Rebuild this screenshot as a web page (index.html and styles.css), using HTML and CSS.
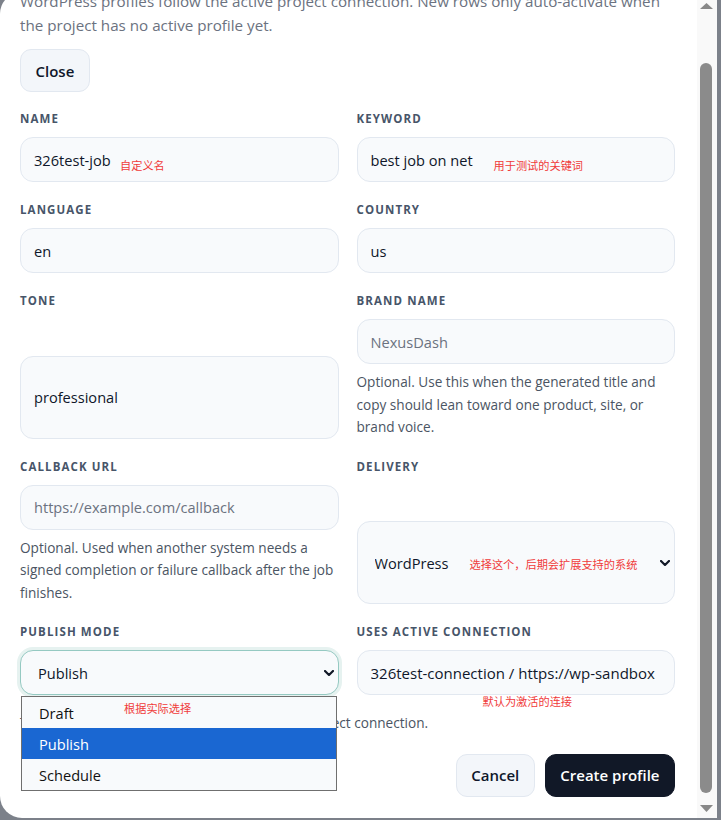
FILE: index.html
```html
<!DOCTYPE html>
<html lang="en">
<head>
<meta charset="utf-8">
<title>New content profile</title>
<link rel="stylesheet" href="styles.css">
</head>
<body>
<div class="modal">
  <div class="modal-body" id="modal-body">
    <header class="modal-head">
      <h2 class="title">New content profile</h2>
      <p class="desc">WordPress profiles follow the active project connection. New rows only auto-activate when the project has no active profile yet.</p>
      <button class="btn btn-light" type="button">Close</button>
    </header>
    <form class="form">
      <div class="grid">
        <div class="field">
          <label class="field-label">Name</label>
          <div class="control">
            <input class="input" value="326test-job">
            <span class="note note-name">自定义名</span>
          </div>
        </div>
        <div class="field">
          <label class="field-label">Keyword</label>
          <div class="control">
            <input class="input" value="best job on net">
            <span class="note note-keyword">用于测试的关键词</span>
          </div>
        </div>
        <div class="field">
          <label class="field-label">Language</label>
          <div class="control"><input class="input" value="en"></div>
        </div>
        <div class="field">
          <label class="field-label">Country</label>
          <div class="control"><input class="input" value="us"></div>
        </div>
        <div class="field field-tall">
          <label class="field-label">Tone</label>
          <div class="control"><input class="input input-tall" value="professional"></div>
        </div>
        <div class="field">
          <label class="field-label">Brand name</label>
          <div class="control"><input class="input" placeholder="NexusDash"></div>
          <p class="help">Optional. Use this when the generated title and copy should lean toward one product, site, or brand voice.</p>
        </div>
        <div class="field">
          <label class="field-label">Callback URL</label>
          <div class="control"><input class="input" placeholder="https://example.com/callback"></div>
          <p class="help">Optional. Used when another system needs a signed completion or failure callback after the job finishes.</p>
        </div>
        <div class="field field-tall">
          <label class="field-label">Delivery</label>
          <div class="control">
            <select class="input select input-tall"><option>WordPress</option></select>
            <svg class="chev" viewBox="0 0 10 6"><path d="M1 1 L5 5 L9 1" fill="none" stroke="#111827" stroke-width="2.2" stroke-linecap="round" stroke-linejoin="round"/></svg>
            <span class="note note-delivery">选择这个，后期会扩展支持的系统</span>
          </div>
        </div>
        <div class="field">
          <label class="field-label">Publish mode</label>
          <div class="control">
            <select class="input select select-focus"><option>Draft</option><option selected>Publish</option><option>Schedule</option></select>
            <svg class="chev" viewBox="0 0 10 6"><path d="M1 1 L5 5 L9 1" fill="none" stroke="#111827" stroke-width="2.2" stroke-linecap="round" stroke-linejoin="round"/></svg>
            <div class="dropdown">
              <div class="option">Draft</div>
              <div class="option option-active">Publish</div>
              <div class="option">Schedule</div>
              <span class="note note-mode">根据实际选择</span>
            </div>
          </div>
        </div>
        <div class="field">
          <label class="field-label">Uses active connection</label>
          <div class="control">
            <input class="input input-conn" readonly value="326test-connection / https://wp-sandbox">
            <span class="note note-conn">默认为激活的连接</span>
          </div>
        </div>
        <p class="help span-2 help-full">This profile always publishes using the active project connection.</p>
      </div>
      <div class="actions">
        <button class="btn btn-light" type="button">Cancel</button>
        <button class="btn btn-dark" type="button">Create profile</button>
      </div>
    </form>
  </div>
  <div class="scrollbar" aria-hidden="true">
    <svg class="sb-arrow" viewBox="0 0 20 17"><polygon points="3,17 9.5,11 16,17" fill="#888888"/></svg>
    <div class="sb-track"><div class="sb-thumb"></div></div>
    <svg class="sb-arrow" viewBox="0 0 20 17"><polygon points="3,4 9.5,11 16,4" fill="#888888"/></svg>
  </div>
</div>
<script src="script.js"></script>
</body>
</html>
```
FILE: styles.css
```css
html, body {
  margin: 0;
  height: 820px;
  overflow: hidden;
  background: #7c818a;
  font-family: "Open Sans", "Noto Sans", sans-serif;
}

.modal {
  display: flex;
  width: 717px;
  height: 826px;
  margin-top: -8px;
  background: #ffffff;
  border-radius: 22px 0 0 22px;
  overflow: hidden;
}

.modal-body {
  position: relative;
  flex: 1;
  min-width: 0;
  box-sizing: border-box;
  height: 100%;
  padding: 20px 22px 60px 20px;
  overflow: hidden;
}

.scrollbar {
  display: flex;
  flex-direction: column;
  width: 20px;
  flex: none;
  background: #f9f9f9;
}

.sb-arrow {
  display: block;
  width: 20px;
  height: 17px;
  flex: none;
}

.sb-track {
  flex: 1;
  padding: 54px 5px 0 3px;
}

.sb-thumb {
  height: 730px;
  border-radius: 6px;
  background: #8b8b8b;
}

.title {
  margin: 0 0 10px;
  font-size: 20px;
  line-height: 28px;
  font-weight: 700;
  color: #0f172a;
}

.desc {
  margin: 0 0 12px;
  font-size: 15.2px;
  line-height: 24px;
  color: #6b7280;
}

.btn {
  box-sizing: border-box;
  height: 43px;
  padding: 0 14.5px;
  border-radius: 11px;
  font-family: inherit;
  font-size: 15px;
  font-weight: 600;
  cursor: pointer;
}

.btn-light {
  background: #f3f6fa;
  border: 1px solid #e2e8f0;
  color: #0f172a;
}

.btn-dark {
  background: #111827;
  border: 1px solid #111827;
  color: #ffffff;
}

.form {
  margin-top: 19px;
}

.grid {
  display: grid;
  grid-template-columns: 1fr 1fr;
  column-gap: 18px;
  row-gap: 20px;
}

.field {
  display: flex;
  flex-direction: column;
  gap: 10px;
  min-width: 0;
}

.field-tall {
  justify-content: space-between;
}

.field-label {
  font-size: 11.5px;
  line-height: 16px;
  font-weight: 700;
  letter-spacing: 1.1px;
  text-transform: uppercase;
  color: #475569;
}

.control {
  position: relative;
}

.input {
  display: block;
  box-sizing: border-box;
  width: 100%;
  height: 45px;
  margin: 0;
  padding: 0 13px;
  border: 1px solid #e2e8f0;
  border-radius: 13px;
  background: #f8fafc;
  font-family: inherit;
  font-size: 14.6px;
  color: #0f172a;
  outline: none;
}

.input-conn {
  font-size: 15px;
}

.input::placeholder {
  color: #6b7280;
}

.input-tall {
  height: 83px;
}

.select {
  -webkit-appearance: none;
  appearance: none;
  padding: 0 30px 0 17px;
}

.select-focus {
  border-color: #95c9c2;
  box-shadow: 0 0 0 3px #e6f2f0;
}

.chev {
  position: absolute;
  right: 5px;
  top: 50%;
  width: 10px;
  height: 6px;
  margin-top: -3px;
  pointer-events: none;
}

.help {
  margin: -3px 0 0;
  font-size: 13.6px;
  line-height: 22.5px;
  color: #4b5563;
}

.span-2 {
  grid-column: 1 / -1;
}

.help-full {
  margin-top: -3px;
}

.dropdown {
  position: absolute;
  top: calc(100% + 1px);
  left: 1px;
  width: 316px;
  box-sizing: border-box;
  border: 1px solid #6f6f6f;
  background: #f8fafc;
  z-index: 5;
}

.option {
  height: 31px;
  padding: 0 17px;
  display: flex;
  align-items: center;
  font-size: 14.6px;
  color: #111111;
}

.option-active {
  background: #1a67d2;
  color: #ffffff;
}

.note {
  position: absolute;
  font-family: "Noto Sans CJK SC", sans-serif;
  font-size: 11.2px;
  line-height: 14px;
  color: #f03a3a;
  white-space: nowrap;
  pointer-events: none;
}

.note-name { left: 100px; top: 21px; }
.note-keyword { left: 137px; top: 21px; }
.note-delivery { left: 113px; top: 36px; }
.note-mode { left: 102px; top: 4px; }
.note-conn { left: 126px; top: 44px; }

.actions {
  display: flex;
  justify-content: flex-end;
  gap: 10px;
  margin-top: 19px;
}
```
FILE: script.js
```js
(function () {
  var body = document.getElementById('modal-body');
  var d = document.querySelector('.desc');
  body.scrollTop = d.offsetTop + 3;
})();
```
